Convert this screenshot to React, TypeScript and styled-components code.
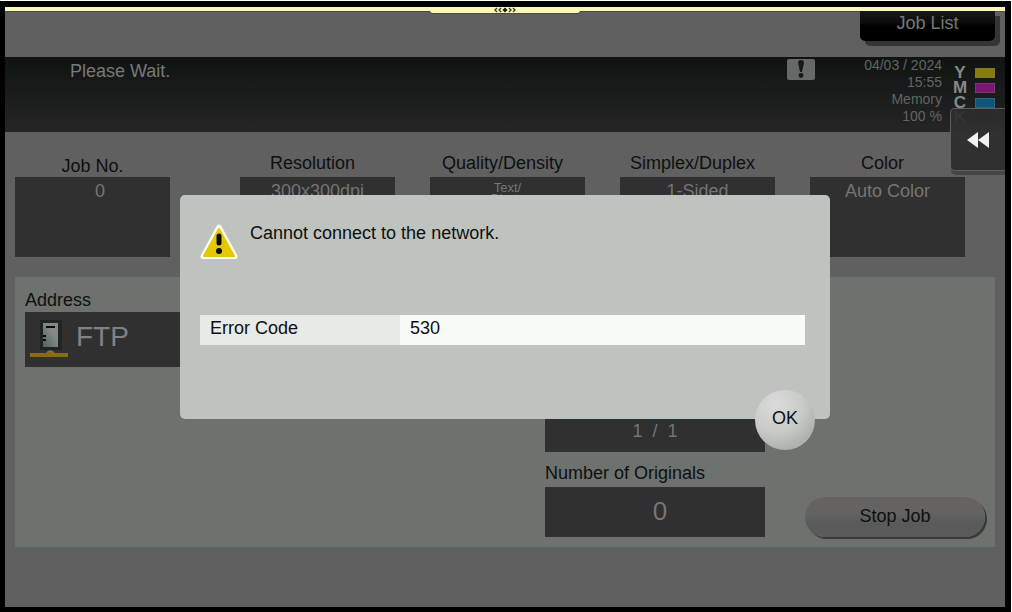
import React from "react";
import styled, { createGlobalStyle } from "styled-components";

const GlobalStyle = createGlobalStyle`
  *, *::before, *::after { box-sizing: border-box; }
  body {
    margin: 0;
    background: #000;
    font-family: "Liberation Sans", Arial, sans-serif;
    font-size: 18px;
    line-height: 20px;
    color: #0e100f;
  }
  button { font: inherit; color: inherit; border: 0; padding: 0; cursor: pointer; }
`;

const Frame = styled.div`
  background: #000;
  border-top: 1px solid #fff;
  border-right: 1px solid #fff;
  padding: 6px 6px 5px 5px;
`;

const Screen = styled.main`
  position: relative;
  overflow: hidden;
  background: #606060;
  padding-bottom: 60px;
`;

const TopBar = styled.header`
  display: flex;
  justify-content: flex-end;
  height: 50px;
  padding-right: 10px;
  border-top: 4px solid #f9f8b4;
  box-shadow: inset 0 1px 0 #4c4c38;
`;

const PullTab = styled.div`
  position: absolute;
  top: 0;
  left: 50%;
  width: 150px;
  height: 6px;
  margin-left: -75px;
  background: #f9f8b4;
  border-radius: 0 0 3px 3px;
  display: flex;
  justify-content: center;
  box-shadow: 0 1px 0 #4c4c38;
`;

const JobListButton = styled.button`
  width: 135px;
  height: 30px;
  padding-bottom: 6px;
  border-radius: 0 0 5px 5px;
  background: linear-gradient(#151917 0, #0b0d0c 12px, #000 14px);
  box-shadow: 5px 5px 0 #353535;
  color: #757876;
`;

const StatusBar = styled.section`
  display: flex;
  align-items: flex-start;
  height: 75px;
  padding: 0 10px 0 65px;
  background: linear-gradient(#0f1411, #252525);
  color: #777a78;
`;

const StatusText = styled.p`
  flex: 1;
  margin: 4px 0 0;
`;

const AlertIcon = styled.svg`
  display: block;
  margin-top: 2px;
`;

const Readout = styled.div`
  width: 127px;
  font-size: 14px;
  line-height: 17px;
  text-align: right;
  color: #626563;
`;

const TonerList = styled.ul`
  list-style: none;
  margin: 8px 0 0 8px;
  padding: 0;
`;

const Toner = styled.li`
  display: grid;
  grid-template-columns: 20px 20px;
  column-gap: 5px;
  align-items: center;
  height: 15px;
  font-size: 17px;
  line-height: 15px;
  font-weight: bold;
  text-align: center;
  color: #868987;
`;

const TonerBar = styled.span<{ $color: string }>`
  height: 10px;
  background: ${(p) => p.$color};
  border: 1px solid rgba(120, 120, 120, 0.35);
`;

const Fields = styled.section`
  display: grid;
  grid-template-columns: 1fr 0 repeat(4, 1fr);
  column-gap: 35px;
  align-items: end;
  padding: 21px 40px 20px 10px;
`;

const Field = styled.div<{ $afterGap?: boolean }>`
  ${(p) => p.$afterGap && "grid-column-start: 3;"}
`;

const FieldLabel = styled.div<{ $lead?: boolean }>`
  height: 24px;
  padding-top: ${(p) => (p.$lead ? 3 : 0)}px;
  padding-right: ${(p) => (p.$lead ? 0 : 10)}px;
  text-align: center;
  white-space: nowrap;
`;

const FieldValue = styled.div<{ $lead?: boolean; $small?: boolean }>`
  height: 80px;
  padding-top: ${(p) => (p.$small ? 5 : 4)}px;
  padding-left: ${(p) => (p.$lead ? 15 : 0)}px;
  background: #303030;
  color: #757575;
  text-align: center;
  white-space: pre-line;
  font-size: ${(p) => (p.$small ? 13 : 18)}px;
  line-height: ${(p) => (p.$small ? 11 : 20)}px;
`;

const Panel = styled.section`
  display: flex;
  gap: 40px;
  min-height: 270px;
  margin: 0 10px;
  padding: 13px 10px 10px;
  background: #6d726e;
`;

const AddressColumn = styled.div`
  flex: 1;
  min-width: 0;
`;

const CountColumn = styled.div`
  display: flex;
  flex-direction: column;
  justify-content: flex-end;
  width: 220px;
`;

const ActionColumn = styled.div`
  display: flex;
  align-items: flex-end;
  width: 180px;
`;

const PanelLabel = styled.div`
  height: 22px;
`;

const AddressBox = styled.div`
  display: flex;
  align-items: flex-start;
  gap: 7px;
  height: 55px;
  padding: 6px 5px 0;
  background: #303030;
  color: #828282;
  font-size: 28px;
  line-height: 38px;
`;

const CountBox = styled.div<{ $large?: boolean }>`
  display: flex;
  align-items: center;
  justify-content: center;
  height: 50px;
  padding: ${(p) => (p.$large ? "0 0 2px 10px" : "8px 0 0")};
  background: #303030;
  color: #757575;
  font-size: ${(p) => (p.$large ? 26 : 18)}px;
  white-space: pre;
`;

const CountLabel = styled.div`
  height: 35px;
  padding-top: 11px;
  white-space: nowrap;
`;

const StopButton = styled.button`
  width: 180px;
  height: 40px;
  padding-bottom: 2px;
  border-radius: 20px;
  background: linear-gradient(#666362 0, #646362 40%, #575b59 65%, #5b5b5a 100%);
  box-shadow: 2px 2px 0 #373a38;
`;

const Drawer = styled.button`
  position: absolute;
  top: 101px;
  right: 0;
  width: 55px;
  height: 63px;
  display: flex;
  align-items: center;
  justify-content: center;
  border: 1px solid #5e605f;
  border-right: 0;
  border-radius: 5px 0 0 5px;
  background: linear-gradient(rgba(42, 45, 43, 0.9), #303030 30px);
  box-shadow: 1px 4px 0 #454545;
`;

const Dialog = styled.section`
  position: absolute;
  top: 188px;
  left: 17.5%;
  right: 17.5%;
  height: 224px;
  padding: 28px 25px 0 20px;
  border-radius: 5px;
  background: #bfc3bf;
`;

const Message = styled.div`
  display: flex;
  gap: 12px;
  height: 92px;

  p { margin: 0; }
  svg { display: block; }
`;

const DetailTable = styled.table`
  width: 100%;
  height: 30px;
  border-collapse: collapse;
  table-layout: fixed;

  th, td {
    padding: 0 10px 4px;
    font-weight: normal;
    text-align: left;
  }
  th { width: 200px; background: #e7eae7; }
  td { background: #f7fbf8; }
`;

const OkButton = styled.button`
  position: absolute;
  right: 15px;
  bottom: -31px;
  width: 60px;
  height: 60px;
  padding-bottom: 4px;
  border-radius: 50%;
  background: radial-gradient(circle at 35% 25%, #dadbda 0, #c9cbc9 45%, #aeb1ae 75%, #bcbebc 100%);
`;

const toners = [
  { name: "Y", color: "#857c0c" },
  { name: "M", color: "#7b1673" },
  { name: "C", color: "#0c587c" },
  { name: "K", color: "#151515" },
];

const fields = [
  { label: "Job No.", value: "0" },
  { label: "Resolution", value: "300x300dpi" },
  { label: "Quality/Density", value: "Text/\nPhoto", small: true },
  { label: "Simplex/Duplex", value: "1-Sided" },
  { label: "Color", value: "Auto Color" },
];

const ServerIcon = () => (
  <svg width="39" height="42" viewBox="0 0 39 42" aria-hidden="true">
    <defs>
      <linearGradient id="server" x1="0" y1="1" x2="1" y2="0">
        <stop offset="0" stopColor="#4c6265" />
        <stop offset="0.6" stopColor="#858885" />
      </linearGradient>
    </defs>
    <path d="M10 2h22v30H10z" fill="#202523" />
    <path d="M13 5h15v24H13z" fill="url(#server)" />
    <path d="M16 8h9v2h-9z" fill="#090c0b" />
    <path d="M13 17h3v2h-3zM13 21h3v2h-3z" fill="#070909" />
    <path d="M0 35h16l2-2h5l2 2h13v4H0z" fill="#8a6d08" />
    <path d="M17 34l3-2 3 2z" fill="#747771" />
  </svg>
);

const WarningIcon = () => (
  <svg width="38" height="36" viewBox="0 0 38 36" role="img" aria-label="Warning">
    <path d="M19 4L35 33.5H3z" fill="#fffff0" stroke="#fffff0" strokeWidth="5" strokeLinejoin="round" />
    <path d="M19 6L34 33H4z" fill="#e5c900" stroke="#e5c900" strokeWidth="2" strokeLinejoin="round" />
    <path d="M19 13v7" stroke="#080806" strokeWidth="5" strokeLinecap="round" />
    <circle cx="19" cy="28" r="3" fill="#080806" />
  </svg>
);

export default function App() {
  return (
    <>
      <GlobalStyle />
      <Frame>
        <Screen>
          <TopBar>
            <JobListButton type="button">Job List</JobListButton>
          </TopBar>
          <PullTab>
            <svg width="22" height="6" viewBox="0 0 22 6" aria-hidden="true">
              <path
                d="M3 1L1 3l2 2M7 1L5 3l2 2M15 1l2 2-2 2M19 1l2 2-2 2"
                fill="none"
                stroke="#3c3c26"
                strokeWidth="1.4"
              />
              <path d="M11 0.5L13.5 3 11 5.5 8.5 3z" fill="#161610" />
            </svg>
          </PullTab>

          <StatusBar>
            <StatusText>Please Wait.</StatusText>
            <AlertIcon width="28" height="21" viewBox="0 0 28 21" role="img" aria-label="Alert">
              <rect width="28" height="21" rx="2" fill="#666967" />
              <path d="M11 3.5a3 2.5 0 0 1 6 0L15 13h-2z" fill="#171a18" />
              <circle cx="14" cy="16.5" r="2.4" fill="#171a18" />
            </AlertIcon>
            <Readout>
              <div>04/03 / 2024</div>
              <div>15:55</div>
              <div>Memory</div>
              <div>100 %</div>
            </Readout>
            <TonerList>
              {toners.map((t) => (
                <Toner key={t.name}>
                  {t.name}
                  <TonerBar $color={t.color} />
                </Toner>
              ))}
            </TonerList>
          </StatusBar>

          <Fields>
            {fields.map((f, i) => (
              <Field key={f.label} $afterGap={i === 1}>
                <FieldLabel $lead={i === 0}>{f.label}</FieldLabel>
                <FieldValue $lead={i === 0} $small={f.small}>{f.value}</FieldValue>
              </Field>
            ))}
          </Fields>

          <Panel>
            <AddressColumn>
              <PanelLabel>Address</PanelLabel>
              <AddressBox>
                <ServerIcon />
                FTP
              </AddressBox>
            </AddressColumn>
            <CountColumn>
              <CountBox>{"1  /  1"}</CountBox>
              <CountLabel>Number of Originals</CountLabel>
              <CountBox $large>0</CountBox>
            </CountColumn>
            <ActionColumn>
              <StopButton type="button">Stop Job</StopButton>
            </ActionColumn>
          </Panel>

          <Drawer type="button" aria-label="Open side panel">
            <svg width="22" height="16" viewBox="0 0 22 16" aria-hidden="true">
              <path d="M11 0v16L0 8zM22 0v16L11 8z" fill="#f1f1f1" />
            </svg>
          </Drawer>

          <Dialog role="dialog" aria-label="Network error">
            <Message>
              <WarningIcon />
              <p>Cannot connect to the network.</p>
            </Message>
            <DetailTable>
              <tbody>
                <tr>
                  <th scope="row">Error Code</th>
                  <td>530</td>
                </tr>
              </tbody>
            </DetailTable>
            <OkButton type="button">OK</OkButton>
          </Dialog>
        </Screen>
      </Frame>
    </>
  );
}
